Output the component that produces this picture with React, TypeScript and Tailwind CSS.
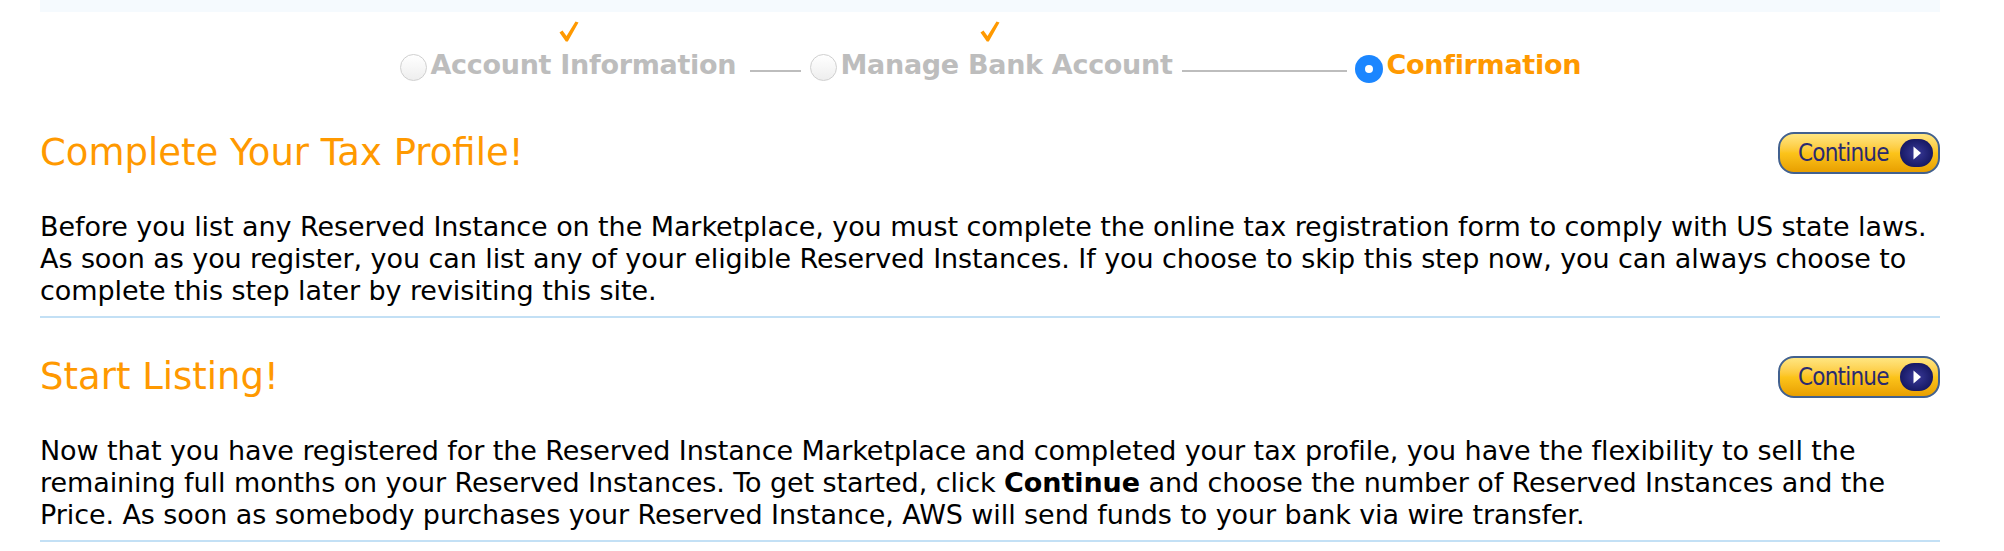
import React from "react";

const Check: React.FC<{ show: boolean }> = ({ show }) => (
  <div className="h-[21px] w-[20px]">
    {show && (
      <svg width="20" height="21" viewBox="0 0 20 21">
        <path d="M0.5 11.5 L3.5 9.5 L7.5 15 L16.5 0.5 L19.5 1.5 L8.8 20.5 L6.8 20.5 Z" fill="#ff9900" />
      </svg>
    )}
  </div>
);

const Radio: React.FC<{ active?: boolean }> = ({ active }) =>
  active ? (
    <div className="mt-[4px] flex h-[28px] w-[28px] items-center justify-center rounded-full bg-[#1b86ff]">
      <div className="h-[8px] w-[8px] rounded-full bg-white" />
    </div>
  ) : (
    <div className="mt-[3px] h-[27px] w-[27px] rounded-full border border-[#cfcfcf] bg-linear-to-b from-[#ffffff] to-[#eeeeee]" />
  );

const Step: React.FC<{ label: string; labelW: string; done: boolean; active?: boolean }> = ({
  label,
  labelW,
  done,
  active,
}) => (
  <div className="flex flex-col items-center">
    <Check show={done} />
    <div className="mt-[9px] flex items-start">
      <Radio active={active} />
      <span
        className={`ml-[4px] whitespace-nowrap text-[27px] font-bold leading-[28px] tracking-[-0.3px] ${labelW} ${
          active ? "text-[#ff9900]" : "text-[#bdbdbd]"
        }`}
      >
        {label}
      </span>
    </div>
  </div>
);

const ContinueButton: React.FC = () => (
  <button className="flex h-[42px] w-[162px] items-center rounded-[16px] border-2 border-[#42618f] bg-linear-to-b from-[#ffe680] via-[#fcc41a] to-[#e89f00] pl-[18px] pr-[5px]">
    <span
      className="text-[24px] leading-none tracking-[-0.8px] text-[#2a2a70]"
      style={{ fontFamily: '"DejaVu Sans Condensed", "DejaVu Sans", sans-serif' }}
    >
      Continue
    </span>
    <span className="ml-auto flex h-[28px] w-[33px] items-center justify-center rounded-full bg-radial from-[#3a3a9a] to-[#0b0b50]">
      <svg width="10" height="14" viewBox="0 0 10 14">
        <path d="M1.5 0.5 L9 7 L1.5 13.5 Z" fill="#ffffff" />
      </svg>
    </span>
  </button>
);

const Section: React.FC<{ title: string; children: React.ReactNode }> = ({ title, children }) => (
  <div className="pt-[38px]">
    <div className="flex h-[42px] items-center justify-between">
      <h2 className="text-[37px] font-normal leading-[42px] text-[#ff9900]">{title}</h2>
      <ContinueButton />
    </div>
    <p className="mt-[37px] whitespace-nowrap text-[27px] leading-[32px] tracking-[-0.08px] text-black">{children}</p>
    <div className="mt-[9px] h-[2px] bg-[#c3e0f5]" />
  </div>
);

export default function App() {
  return (
    <div
      className="h-[551px] w-[2004px] overflow-hidden bg-white"
      style={{ fontFamily: '"DejaVu Sans", Verdana, sans-serif' }}
    >
      <div className="ml-[40px] w-[1900px]">
        <div className="h-[12px] bg-[#f5fafe]" />

        <div className="flex h-[82px] items-start justify-center pt-[9px]">
          <Step label="Account Information" labelW="w-[308px]" done />
          <div className="ml-[11px] mt-[49px] h-[2px] w-[51px] bg-[#bdbdbd]" />
          <div className="ml-[9px]">
            <Step label="Manage Bank Account" labelW="w-[330px]" done />
          </div>
          <div className="ml-[11px] mt-[49px] h-[2px] w-[165px] bg-[#bdbdbd]" />
          <div className="ml-[8px]">
            <Step label="Confirmation" labelW="w-[194px]" done={false} active />
          </div>
        </div>

        <Section title="Complete Your Tax Profile!">
          Before you list any Reserved Instance on the Marketplace, you must complete the online tax registration form to comply with US state laws.
          <br />
          As soon as you register, you can list any of your eligible Reserved Instances. If you choose to skip this step now, you can always choose to
          <br />
          complete this step later by revisiting this site.
        </Section>

        <Section title="Start Listing!">
          Now that you have registered for the Reserved Instance Marketplace and completed your tax profile, you have the flexibility to sell the
          <br />
          remaining full months on your Reserved Instances. To get started, click <b>Continue</b> and choose the number of Reserved Instances and the
          <br />
          Price. As soon as somebody purchases your Reserved Instance, AWS will send funds to your bank via wire transfer.
        </Section>
      </div>
    </div>
  );
}
